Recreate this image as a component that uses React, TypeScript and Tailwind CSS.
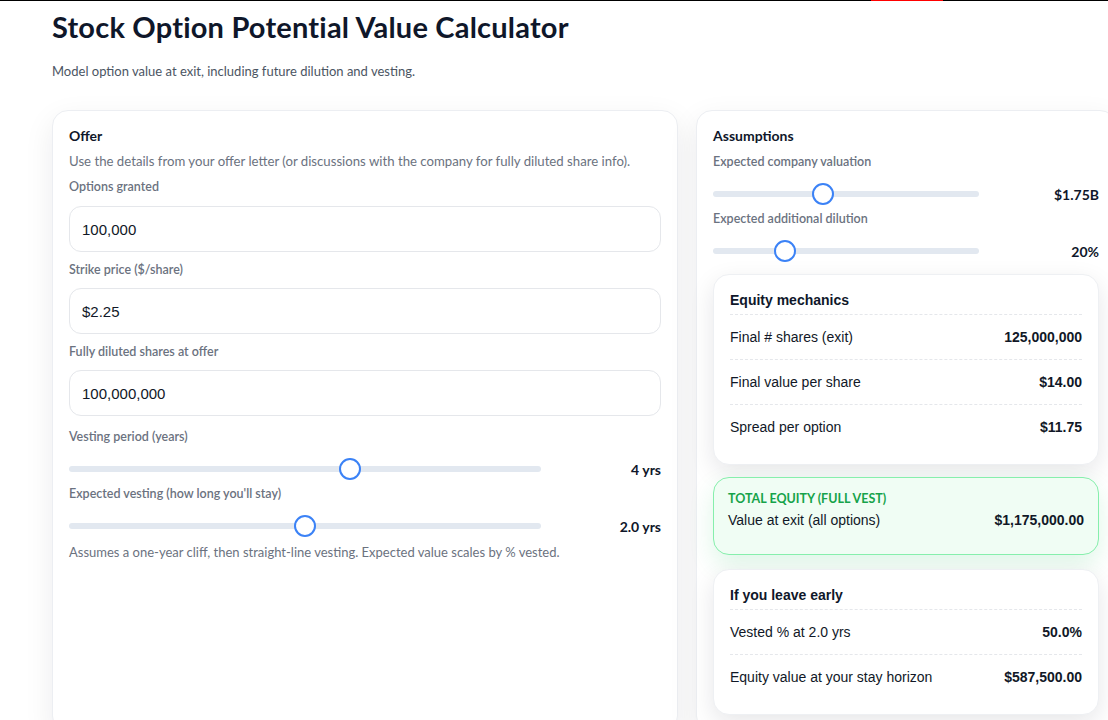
import React from "react";

const ui = { fontFamily: 'Lato, "Noto Sans", sans-serif' };
const arial = { fontFamily: '"Liberation Sans", Arial, sans-serif' };

function Slider({ frac, value }: { frac: number; value: string }) {
  return (
    <div className="flex h-[22px] items-center">
      <div className="relative h-[22px] flex-1">
        <div className="absolute inset-x-0 top-[8px] h-[6px] rounded-full bg-[#e2e8f0]" />
        <div
          className="absolute top-0 h-[22px] w-[22px] rounded-full border-2 border-[#3b82f6] bg-white"
          style={{ left: `calc(${frac} * (100% - 22px))` }}
        />
      </div>
      <div className="w-[120px] text-right text-[14px] font-bold text-[#0f172a]" style={ui}>
        {value}
      </div>
    </div>
  );
}

function Label({ children, className = "" }: { children: React.ReactNode; className?: string }) {
  return (
    <div className={`text-[12.5px] leading-4 font-semibold text-[#6b7280] ${className}`} style={ui}>
      {children}
    </div>
  );
}

function Field({ value, className = "" }: { value: string; className?: string }) {
  return (
    <input
      readOnly
      value={value}
      className={`block h-[46px] w-full rounded-xl border border-[#e5e7eb] bg-white px-3 text-[15px] text-[#111827] outline-none ${className}`}
      style={arial}
    />
  );
}

function Row({ label, value }: { label: string; value: string }) {
  return (
    <div className="flex items-center justify-between border-t border-dashed border-[#e5e7eb] py-3 text-[14px] leading-5 text-[#111827]" style={arial}>
      <span>{label}</span>
      <span className="font-bold">{value}</span>
    </div>
  );
}

function InfoCard({ title, rows }: { title: string; rows: [string, string][] }) {
  return (
    <div className="rounded-2xl border border-[#eef0f3] bg-white px-4 pt-[15px] pb-[15px] shadow-[0_8px_24px_rgba(15,23,42,0.10)]">
      <div className="pb-1 text-[14px] leading-5 font-bold text-[#0f172a]" style={arial}>
        {title}
      </div>
      {rows.map(([l, v]) => (
        <Row key={l} label={l} value={v} />
      ))}
    </div>
  );
}

export default function App() {
  return (
    <div className="min-h-screen w-full overflow-hidden bg-white">
      <div className="flex h-px w-full">
        <div className="w-[871px] bg-black" />
        <div className="w-[72px] bg-[#ff0000]" />
        <div className="flex-1 bg-black" />
      </div>
      <div className="pl-[52px] pt-2">
        <h1 className="text-[29px] leading-9 font-bold tracking-[0.2px] text-[#0f172a]" style={ui}>
          Stock Option Potential Value Calculator
        </h1>
        <p className="mt-4 text-[13px] leading-5 text-[#4b5563]" style={ui}>
          Model option value at exit, including future dilution and vesting.
        </p>

        <div className="mt-[29px] flex w-[1065px] items-stretch gap-[18px]">
          <section className="w-[626px] shrink-0 rounded-2xl border border-[#eceef2] bg-white px-4 pt-[15px] pb-4 shadow-[0_10px_30px_rgba(15,23,42,0.08)]">
            <div className="text-[14px] leading-5 font-bold text-[#0f172a]" style={ui}>
              Offer
            </div>
            <p className="mt-[5px] text-[13.2px] leading-5 text-[#6b7280]" style={ui}>
              Use the details from your offer letter (or discussions with the company for fully diluted share info).
            </p>
            <Label className="mt-2">Options granted</Label>
            <Field value="100,000" className="mt-[11px]" />
            <Label className="mt-[10px]">Strike price ($/share)</Label>
            <Field value="$2.25" className="mt-[10px]" />
            <Label className="mt-[10px]">Fully diluted shares at offer</Label>
            <Field value="100,000,000" className="mt-[10px]" />
            <Label className="mt-[13px]">Vesting period (years)</Label>
            <div className="mt-[13px]">
              <Slider frac={0.6} value="4 yrs" />
            </div>
            <Label className="mt-[6px]">Expected vesting (how long you'll stay)</Label>
            <div className="mt-[13px]">
              <Slider frac={0.5} value="2.0 yrs" />
            </div>
            <p className="mt-[7px] text-[13px] leading-4 text-[#6b7280]" style={ui}>
              Assumes a one-year cliff, then straight-line vesting. Expected value scales by % vested.
            </p>
          </section>

          <section className="w-[420px] shrink-0 rounded-2xl border border-[#eceef2] bg-white px-4 pt-[15px] pb-4 shadow-[0_10px_30px_rgba(15,23,42,0.08)]">
            <div className="text-[14px] leading-5 font-bold text-[#0f172a]" style={ui}>
              Assumptions
            </div>
            <Label className="mt-2">Expected company valuation</Label>
            <div className="mt-[13px]">
              <Slider frac={0.406} value="$1.75B" />
            </div>
            <Label className="mt-[6px]">Expected additional dilution</Label>
            <div className="mt-[13px]">
              <Slider frac={0.25} value="20%" />
            </div>

            <div className="mt-3 flex flex-col gap-3">
              <InfoCard
                title="Equity mechanics"
                rows={[
                  ["Final # shares (exit)", "125,000,000"],
                  ["Final value per share", "$14.00"],
                  ["Spread per option", "$11.75"],
                ]}
              />

              <div className="rounded-2xl border border-[#86efac] bg-[#f0fdf4] px-[14px] pt-[13px] pb-[24px] shadow-[0_10px_25px_rgba(34,197,94,0.15)]">
                <div className="text-[12.5px] leading-4 font-bold uppercase text-[#16a34a]" style={ui}>
                  Total equity (full vest)
                </div>
                <div className="mt-[3px] flex items-center justify-between text-[14px] leading-5 text-[#111827]" style={arial}>
                  <span>Value at exit (all options)</span>
                  <span className="font-bold">$1,175,000.00</span>
                </div>
              </div>

              <div className="mt-[2px]">
                <InfoCard
                  title="If you leave early"
                  rows={[
                    ["Vested % at 2.0 yrs", "50.0%"],
                    ["Equity value at your stay horizon", "$587,500.00"],
                  ]}
                />
              </div>
            </div>
          </section>
        </div>
        <div className="h-10" />
      </div>
    </div>
  );
}
